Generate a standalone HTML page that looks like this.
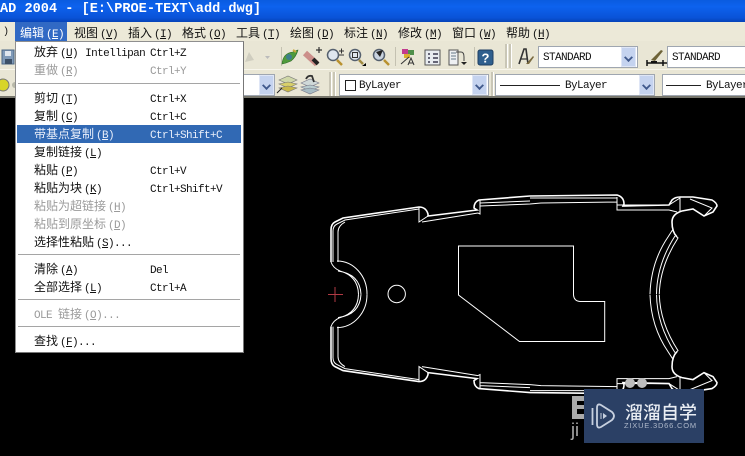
<!DOCTYPE html>
<html><head><meta charset="utf-8">
<style>
html,body{margin:0;padding:0;background:#000}
#p{position:relative;width:745px;height:456px;overflow:hidden;background:#000;font-family:"Liberation Mono","Noto Sans CJK SC",monospace;font-size:10px;color:#111}
#p div{position:absolute;white-space:nowrap}
.c{font-family:"Noto Sans CJK SC","WenQuanYi Zen Hei",sans-serif;font-size:12px}
.m{top:23px;height:19px;line-height:19px}
.m span,.i span{font-family:"Liberation Mono",monospace;font-size:11px;letter-spacing:-.6px;margin-left:2px}
.i{left:34px;height:18px;line-height:18px}
.s{left:150px;height:18px;line-height:22px;font-family:"Liberation Mono",monospace;font-size:11px;letter-spacing:-.6px}
.d{color:#9a9a9a}
u{text-decoration:underline}
.sep{left:18px;width:222px;height:1px;background:#a5a5a5;border-bottom:1px solid #fff}
.combo{background:#fff;border:1px solid #9fa6b0;box-sizing:border-box;line-height:22px;padding-left:4px;font-size:11px;letter-spacing:-.6px}
.b{width:15px;background:#c5d3ef;border:1px solid #dfe6f6;box-sizing:border-box}
.b:after{content:"";position:absolute;left:3px;top:6px;width:5px;height:5px;border:solid #40598c;border-width:0 2px 2px 0;transform:rotate(45deg) scale(.9)}
.g{width:2px;background:#c9c6b6;border-right:1px solid #fff}
</style></head><body><div id="p">

<div style="left:0;top:0;width:745px;height:22px;background:linear-gradient(#0a5be0,#0d62ee 30%,#0a53d8 80%,#0643b8)"></div>
<div style="left:0;top:1px;height:18px;line-height:18px;font-family:'Liberation Mono',monospace;font-weight:bold;font-size:13.6px;color:#fff">AD 2004 - [E:\PROE-TEXT\add.dwg]</div>

<div style="left:0;top:22px;width:745px;height:19px;background:#ece9d8"></div>
<div style="left:0;top:41px;width:745px;height:28px;background:#e9e6d5"></div>
<div style="left:0;top:69px;width:745px;height:28px;background:#e9e6d5;border-top:1px solid #f8f6ec;box-sizing:border-box"></div>
<div style="left:0;top:96px;width:745px;height:2px;background:#77766c"></div>

<div style="left:15px;top:22px;width:52px;height:19px;background:#3169c4"></div>
<div class="m" style="left:3px">)</div>
<div class="m c" style="left:20px;color:#fff">编辑<span>(<u>E</u>)</span></div>
<div class="m c" style="left:74px">视图<span>(<u>V</u>)</span></div>
<div class="m c" style="left:128px">插入<span>(<u>I</u>)</span></div>
<div class="m c" style="left:182px">格式<span>(<u>O</u>)</span></div>
<div class="m c" style="left:236px">工具<span>(<u>T</u>)</span></div>
<div class="m c" style="left:290px">绘图<span>(<u>D</u>)</span></div>
<div class="m c" style="left:344px">标注<span>(<u>N</u>)</span></div>
<div class="m c" style="left:398px">修改<span>(<u>M</u>)</span></div>
<div class="m c" style="left:452px">窗口<span>(<u>W</u>)</span></div>
<div class="m c" style="left:506px">帮助<span>(<u>H</u>)</span></div>

<svg style="position:absolute;left:0;top:41px" width="745" height="56" viewBox="0 41 745 56">
<rect x="2" y="50" width="12" height="14" fill="#7f9ab8" stroke="#4c6684"/><rect x="5" y="51" width="6" height="5" fill="#dfe6ee"/><rect x="5" y="59" width="7" height="5" fill="#3c5068"/>
<circle cx="3" cy="85" r="6" fill="#d8d52a" stroke="#777"/><circle cx="15" cy="85" r="3" fill="#b8b8a8"/>
<path d="M245 62l4-10 5 8z" fill="#cfcdbf"/><path d="M265 56h5l-2.500 3z" fill="#bbb"/>
<line x1="281.500" y1="47" x2="281.500" y2="66" stroke="#c4c1b1"/>
<path d="M282 64Q283 53 293 52q4-2 5-2-2 7-7 11l-5 2z" fill="#4f9a3b" stroke="#2d6a2a" stroke-width=".6"/><circle cx="289" cy="57" r="3" fill="#3d7e8c"/><path d="M293 50l3 2" stroke="#c9a93a" stroke-width="2"/>
<path d="M305 53l12 11" stroke="#cc8f8a" stroke-width="6"/><path d="M313 59l5 5" stroke="#222" stroke-width="4"/><path d="M316 50h6m-3-3v6" stroke="#333" stroke-width="1.200"/>
<circle cx="333" cy="55" r="5.500" fill="#dfe6ee" stroke="#55606e" stroke-width="1.500"/><path d="M337 60l5 5" stroke="#b9912f" stroke-width="2.500"/><path d="M339 51h5m-2.500-2.500v5M339 55h5" stroke="#333" fill="none"/>
<circle cx="355" cy="55" r="5.500" fill="#dfe6ee" stroke="#55606e" stroke-width="1.500"/><rect x="352.500" y="52.500" width="5" height="5" fill="none" stroke="#333"/><path d="M359 60l4 4" stroke="#a08a40" stroke-width="2.500"/><path d="M362 66l4-3v3z" fill="#000"/>
<circle cx="379" cy="55" r="5.500" fill="#c9d3e0" stroke="#55606e" stroke-width="1.500"/><path d="M376 52l7-2-3 7z" fill="#222"/><path d="M384 60l5 5" stroke="#b9912f" stroke-width="2.500"/>
<line x1="395.500" y1="47" x2="395.500" y2="66" stroke="#c4c1b1"/>
<rect x="402" y="49" width="6" height="5" fill="#c23b8e"/><rect x="408" y="50" width="6" height="5" fill="#4f8f4a"/><rect x="404" y="54" width="6" height="4" fill="#d8b02f"/><path d="M401 64l8-7m-1 8l3-7 3 7m-5-2h4" stroke="#333" fill="none"/>
<rect x="425" y="50" width="15" height="15" fill="#e8ecf0" stroke="#555"/><path d="M428 53h2v2h-2zM433 53h5v2h-5zM428 57h2v2h-2zM433 57h5v2h-5zM428 61h2v2h-2zM433 61h5v2h-5z" fill="#667"/>
<rect x="449" y="50" width="9" height="15" fill="#eef0f2" stroke="#555"/><path d="M451 53h5M451 56h5M451 59h5" stroke="#678"/><path d="M456 52h5q3 0 3 5v4" stroke="#444" fill="none"/><path d="M461 62h6l-3 3z" fill="#222"/>
<line x1="474.500" y1="47" x2="474.500" y2="66" stroke="#c4c1b1"/>
<rect x="478" y="50" width="15" height="15" rx="2" fill="#2f5f8e" stroke="#1f3f62"/>
<text x="485.500" y="62.500" text-anchor="middle" font-family="Liberation Sans" font-weight="bold" font-size="13" fill="#fff">?</text>
<path d="M519 64l5-15h2l2 15" fill="none" stroke="#333" stroke-width="1.600"/><path d="M521 59h6" stroke="#333" stroke-width="1.200"/><path d="M526 64l7-8 1 1-5 7z" fill="#7a6a40"/>
<path d="M647 63h26M647 60v6M663 60v6" stroke="#111" stroke-width="1.500"/><path d="M651 60l10-10 2 1-8 10z" fill="#6e6338"/><path d="M651 61h6v2h-6z" fill="#111"/>
<path d="M279 80l9-4 9 4-9 4z" fill="#cfd7a8" stroke="#777" stroke-width=".6"/><path d="M279 84l9 4 9-4-9-2z" fill="#d8d06a" stroke="#777" stroke-width=".6"/><path d="M279 88l9 4 9-4-9-2z" fill="#c9b94a" stroke="#777" stroke-width=".6"/><path d="M277 93l5-5" stroke="#222"/>
<path d="M301 83l9-4 9 4-9 4z" fill="#cfd8d8" stroke="#778" stroke-width=".6"/><path d="M301 87l9 4 9-4-9-2z" fill="#b9cdd0" stroke="#778" stroke-width=".6"/><path d="M301 90l9 4 9-4-9-2z" fill="#a7bcc4" stroke="#778" stroke-width=".6"/><path d="M306 79q2-4 6-3l2 6" stroke="#333" stroke-width="1.800" fill="none"/>
</svg>

<div class="g" style="left:329px;top:72px;height:24px"></div>
<div class="g" style="left:333px;top:72px;height:24px"></div>
<div class="g" style="left:505px;top:44px;height:24px"></div>
<div class="g" style="left:509px;top:44px;height:24px"></div>
<div class="g" style="left:491px;top:72px;height:24px"></div>

<div class="combo" style="left:538px;top:46px;width:100px;height:22px">STANDARD</div><div class="b" style="left:621px;top:47px;height:20px"></div>
<div class="combo" style="left:667px;top:46px;width:85px;height:22px">STANDARD</div>
<div class="combo" style="left:236px;top:74px;width:39px;height:22px"></div><div class="b" style="left:259px;top:75px;height:20px"></div>
<div class="combo" style="left:339px;top:74px;width:150px;height:22px;padding-left:19px">ByLayer</div><div class="b" style="left:472px;top:75px;height:20px"></div>
<div style="left:345px;top:80px;width:9px;height:9px;border:1px solid #222;background:#fff"></div>
<div class="combo" style="left:495px;top:74px;width:160px;height:22px;padding-left:69px">ByLayer</div><div class="b" style="left:639px;top:75px;height:20px"></div>
<div style="left:500px;top:85px;width:60px;height:1px;background:#222"></div>
<div class="combo" style="left:662px;top:74px;width:95px;height:22px;padding-left:43px">ByLayer</div>
<div style="left:666px;top:85px;width:35px;height:1px;background:#222"></div>

<svg style="position:absolute;left:0;top:97px" width="745" height="359" viewBox="0 97 745 359">
<defs><g id="h" fill="none" stroke="#fff" stroke-width="1">
<path stroke-width="1.600" d="M331 262V230Q331 224 335 222L343 218 419 207Q426 207 428 214V216L477 210 474 208Q474 202 479 200L530 196 617 195Q624 197 624 204L623 206 669 205 672 200Q675 197 680 197H693L712 200Q717 203 717 206L713 212 704 216 693 209 682 211Q672 214 672 222 672 232 677 237"/>
<path d="M333 262V231Q333 226 337 224L345 220 419 209M338 262V232Q338 226 345 222M419 207V222L428 216M422 222 478 213M480 200V214L478 213M480 203 530 201M480 206 530 204 541 203 617 202M530 198 617 198M617 197V210H669M617 205H669M669 205 680 198M680 197V212M690 199 712 208 704 216M669 210 677 212"/>
<path d="M337 261A30 33 0 0 1 367 294.300M331 262Q333 268 340 271 358 276 358.500 294.300M338 271Q360 274 361 294.300"/>
<path d="M650 294Q651 262 668 237L672.500 230M656.500 294Q657 264 675 236M659.300 294Q660 266 678 238L677 237"/>
</g></defs>
<use href="#h"/><use href="#h" transform="translate(0 588.600) scale(1 -1)"/>
<path d="M458.500 246H573.500V295Q574 301 580 301.500H604.700V341.500H519.500L458.500 295Z" fill="none" stroke="#fff"/>
<circle cx="396.700" cy="294" r="8.700" fill="none" stroke="#fff"/>
<path d="M328 294.500H343M335 287V302" stroke="#b03a44"/>
<circle cx="630" cy="383" r="5" fill="#bdbdbd"/><circle cx="642" cy="383" r="5" fill="#bdbdbd"/>
<path d="M572 396h14v5h-9v4h9v4h-9v5h9v5h-14z" fill="#aaa"/>
<text x="571" y="436" font-family="Liberation Sans" font-size="18" fill="#aaa">ji</text>
<rect x="584" y="389" width="120" height="54" fill="#2b4065"/>
<path d="M597 408Q597 403 601 405L612 412Q616 416 612 420L601 427Q597 429 597 424Z" fill="none" stroke="#c7d0df" stroke-width="1.800"/><path d="M592.500 408V425" stroke="#c7d0df" stroke-width="1.800"/><path d="M603 413l4 3-4 3z" fill="#c7d0df"/><path d="M601 413v6" stroke="#c7d0df"/>
</svg>
<div class="c" style="left:625px;top:400px;height:24px;line-height:24px;font-size:18px;font-weight:500;color:#e9edf3">溜溜自学</div>
<div style="left:624px;top:420px;height:12px;line-height:12px;font-family:'Liberation Sans',sans-serif;font-size:7.500px;color:#aeb8ca;letter-spacing:.8px">ZIXUE.3D66.COM</div>

<div style="left:15px;top:41px;width:229px;height:312px;background:#fff;box-sizing:border-box;border:1px solid #8f8f8f;border-right-color:#777;border-bottom-color:#777"></div>
<div style="left:17px;top:125px;width:224px;height:18px;background:#3169b4"></div>
<div class="i c" style="top:43px">放弃<span>(<u>U</u>)</span><span style="margin-left:7px">Intellipan</span></div><div class="s" style="top:43px">Ctrl+Z</div>
<div class="i c d" style="top:61px">重做<span>(<u>R</u>)</span></div><div class="s d" style="top:61px">Ctrl+Y</div>
<div class="sep" style="top:83px"></div>
<div class="i c" style="top:89px">剪切<span>(<u>T</u>)</span></div><div class="s" style="top:89px">Ctrl+X</div>
<div class="i c" style="top:107px">复制<span>(<u>C</u>)</span></div><div class="s" style="top:107px">Ctrl+C</div>
<div class="i c" style="top:125px;color:#e8eefa">带基点复制<span>(<u>B</u>)</span></div><div class="s" style="top:125px;color:#e8eefa">Ctrl+Shift+C</div>
<div class="i c" style="top:143px">复制链接<span>(<u>L</u>)</span></div>
<div class="i c" style="top:161px">粘贴<span>(<u>P</u>)</span></div><div class="s" style="top:161px">Ctrl+V</div>
<div class="i c" style="top:179px">粘贴为块<span>(<u>K</u>)</span></div><div class="s" style="top:179px">Ctrl+Shift+V</div>
<div class="i c d" style="top:197px">粘贴为超链接<span>(<u>H</u>)</span></div>
<div class="i c d" style="top:215px">粘贴到原坐标<span>(<u>D</u>)</span></div>
<div class="i c" style="top:233px">选择性粘贴<span>(<u>S</u>)...</span></div>
<div class="sep" style="top:254px"></div>
<div class="i c" style="top:260px">清除<span>(<u>A</u>)</span></div><div class="s" style="top:260px">Del</div>
<div class="i c" style="top:278px">全部选择<span>(<u>L</u>)</span></div><div class="s" style="top:278px">Ctrl+A</div>
<div class="sep" style="top:299px"></div>
<div class="i c d" style="top:305px"><span style="margin:0 6px 0 0">OLE</span>链接<span>(<u>O</u>)...</span></div>
<div class="sep" style="top:326px"></div>
<div class="i c" style="top:332px">查找<span>(<u>F</u>)...</span></div>
</div></body></html>
